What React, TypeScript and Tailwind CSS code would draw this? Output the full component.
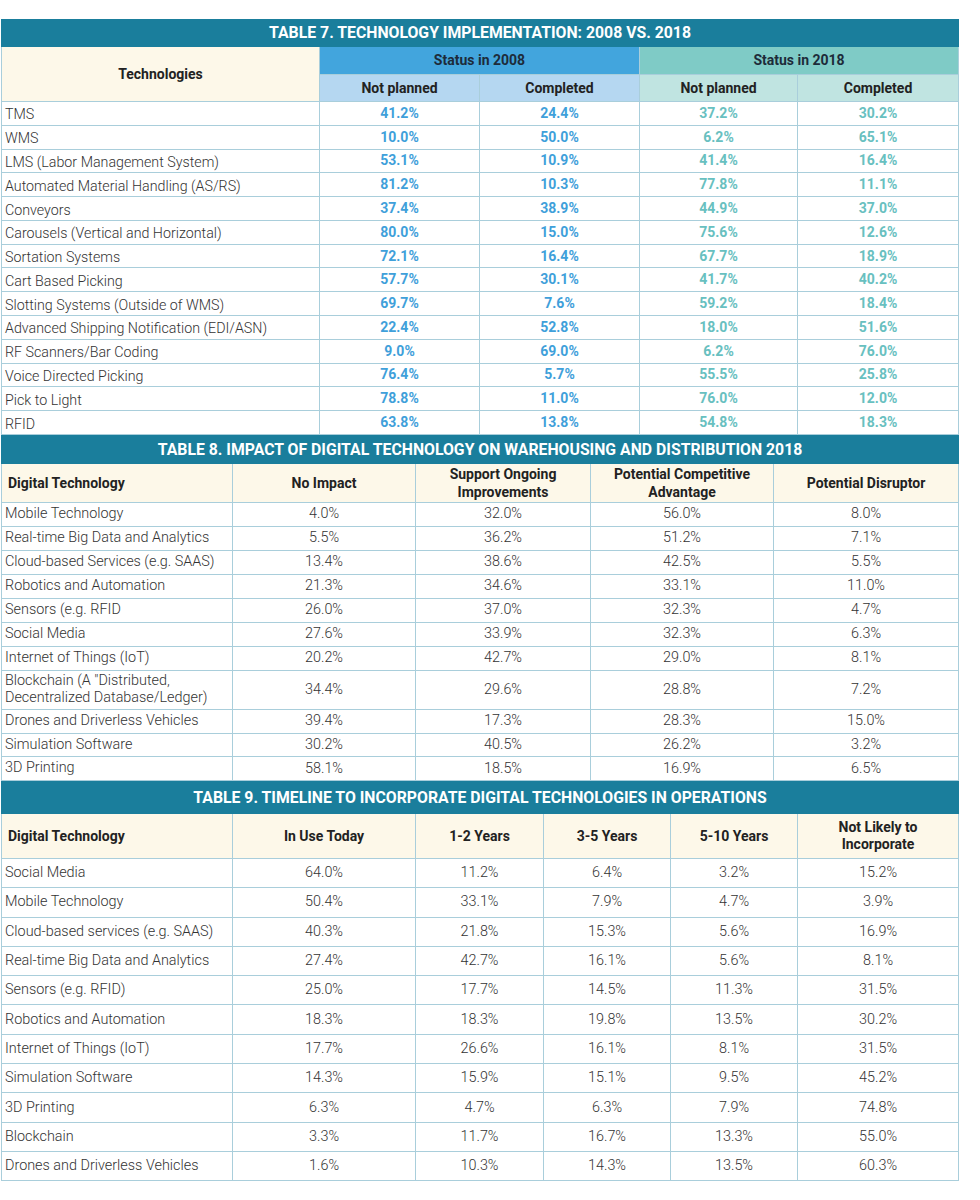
import React from "react";

const t7: [string, string, string, string, string][] = [
  ["TMS", "41.2%", "24.4%", "37.2%", "30.2%"],
  ["WMS", "10.0%", "50.0%", "6.2%", "65.1%"],
  ["LMS (Labor Management System)", "53.1%", "10.9%", "41.4%", "16.4%"],
  ["Automated Material Handling (AS/RS)", "81.2%", "10.3%", "77.8%", "11.1%"],
  ["Conveyors", "37.4%", "38.9%", "44.9%", "37.0%"],
  ["Carousels (Vertical and Horizontal)", "80.0%", "15.0%", "75.6%", "12.6%"],
  ["Sortation Systems", "72.1%", "16.4%", "67.7%", "18.9%"],
  ["Cart Based Picking", "57.7%", "30.1%", "41.7%", "40.2%"],
  ["Slotting Systems (Outside of WMS)", "69.7%", "7.6%", "59.2%", "18.4%"],
  ["Advanced Shipping Notification (EDI/ASN)", "22.4%", "52.8%", "18.0%", "51.6%"],
  ["RF Scanners/Bar Coding", "9.0%", "69.0%", "6.2%", "76.0%"],
  ["Voice Directed Picking", "76.4%", "5.7%", "55.5%", "25.8%"],
  ["Pick to Light", "78.8%", "11.0%", "76.0%", "12.0%"],
  ["RFID", "63.8%", "13.8%", "54.8%", "18.3%"],
];

const t8: { name: React.ReactNode; v: string[]; h: string }[] = [
  { name: "Mobile Technology", v: ["4.0%", "32.0%", "56.0%", "8.0%"], h: "h-[24px]" },
  { name: "Real-time Big Data and Analytics", v: ["5.5%", "36.2%", "51.2%", "7.1%"], h: "h-[24px]" },
  { name: "Cloud-based Services (e.g. SAAS)", v: ["13.4%", "38.6%", "42.5%", "5.5%"], h: "h-[24px]" },
  { name: "Robotics and Automation", v: ["21.3%", "34.6%", "33.1%", "11.0%"], h: "h-[24px]" },
  { name: "Sensors (e.g. RFID", v: ["26.0%", "37.0%", "32.3%", "4.7%"], h: "h-[24px]" },
  { name: "Social Media", v: ["27.6%", "33.9%", "32.3%", "6.3%"], h: "h-[24px]" },
  { name: "Internet of Things (IoT)", v: ["20.2%", "42.7%", "29.0%", "8.1%"], h: "h-[24px]" },
  {
    name: (
      <>
        Blockchain (A "Distributed,
        <br />
        Decentralized Database/Ledger)
      </>
    ),
    v: ["34.4%", "29.6%", "28.8%", "7.2%"],
    h: "h-[39px]",
  },
  { name: "Drones and Driverless Vehicles", v: ["39.4%", "17.3%", "28.3%", "15.0%"], h: "h-[23.7px]" },
  { name: "Simulation Software", v: ["30.2%", "40.5%", "26.2%", "3.2%"], h: "h-[23.7px]" },
  { name: "3D Printing", v: ["58.1%", "18.5%", "16.9%", "6.5%"], h: "h-[23.7px]" },
];

const t9: [string, string, string, string, string, string][] = [
  ["Social Media", "64.0%", "11.2%", "6.4%", "3.2%", "15.2%"],
  ["Mobile Technology", "50.4%", "33.1%", "7.9%", "4.7%", "3.9%"],
  ["Cloud-based services (e.g. SAAS)", "40.3%", "21.8%", "15.3%", "5.6%", "16.9%"],
  ["Real-time Big Data and Analytics", "27.4%", "42.7%", "16.1%", "5.6%", "8.1%"],
  ["Sensors (e.g. RFID)", "25.0%", "17.7%", "14.5%", "11.3%", "31.5%"],
  ["Robotics and Automation", "18.3%", "18.3%", "19.8%", "13.5%", "30.2%"],
  ["Internet of Things (IoT)", "17.7%", "26.6%", "16.1%", "8.1%", "31.5%"],
  ["Simulation Software", "14.3%", "15.9%", "15.1%", "9.5%", "45.2%"],
  ["3D Printing", "6.3%", "4.7%", "6.3%", "7.9%", "74.8%"],
  ["Blockchain", "3.3%", "11.7%", "16.7%", "13.3%", "55.0%"],
  ["Drones and Driverless Vehicles", "1.6%", "10.3%", "14.3%", "13.5%", "60.3%"],
];

const B = "border border-[#a9cedb]";

function Title({ text, h, cols }: { text: string; h: string; cols: number }) {
  return (
    <tr>
      <td
        colSpan={cols}
        className={`${h} bg-[#1a7e9c] text-white font-bold text-[15.8px] text-center p-0 leading-none border border-[#1a7e9c]`}
      >
        {text}
      </td>
    </tr>
  );
}

export default function App() {
  return (
    <div
      className="bg-white w-[980px] h-[1200px] pt-[19px] pl-[1px] text-[#333]"
      style={{ fontFamily: "Roboto, 'Liberation Sans', sans-serif" }}
    >
      {/* TABLE 7 */}
      <table className="w-[957px] table-fixed border-collapse">
        <colgroup>
          <col className="w-[318px]" />
          <col className="w-[160px]" />
          <col className="w-[160px]" />
          <col className="w-[158px]" />
          <col className="w-[161px]" />
        </colgroup>
        <tbody>
          <Title text="TABLE 7. TECHNOLOGY IMPLEMENTATION: 2008 VS. 2018" h="h-[27px]" cols={5} />
          <tr className="h-[28px]">
            <td rowSpan={2} className={`${B} bg-[#fdf8e9] text-center font-bold text-[14px] text-[#222]`}>
              Technologies
            </td>
            <td colSpan={2} className={`${B} bg-[#42a5dd] text-center font-bold text-[14px] text-[#1d2b3a]`}>
              Status in 2008
            </td>
            <td colSpan={2} className={`${B} bg-[#7fcbc6] text-center font-bold text-[14px] text-[#1d2b3a]`}>
              Status in 2018
            </td>
          </tr>
          <tr className="h-[27px]">
            <td className={`${B} bg-[#b5d7f1] text-center font-bold text-[14px] text-[#222]`}>Not planned</td>
            <td className={`${B} bg-[#b5d7f1] text-center font-bold text-[14px] text-[#222]`}>Completed</td>
            <td className={`${B} bg-[#c0e4e1] text-center font-bold text-[14px] text-[#222]`}>Not planned</td>
            <td className={`${B} bg-[#c0e4e1] text-center font-bold text-[14px] text-[#222]`}>Completed</td>
          </tr>
          {t7.map((r) => (
            <tr key={r[0]} className="h-[23.79px]">
              <td className={`${B} px-[3px] pt-[3px] pb-0 text-[14.25px] font-light leading-[19px] whitespace-nowrap`}>{r[0]}</td>
              <td className={`${B} text-center font-bold text-[14px] leading-[19px] text-[#3fa0da]`}>{r[1]}</td>
              <td className={`${B} text-center font-bold text-[14px] leading-[19px] text-[#3fa0da]`}>{r[2]}</td>
              <td className={`${B} text-center font-bold text-[14px] leading-[19px] text-[#68c0c0]`}>{r[3]}</td>
              <td className={`${B} text-center font-bold text-[14px] leading-[19px] text-[#68c0c0]`}>{r[4]}</td>
            </tr>
          ))}
        </tbody>
      </table>

      {/* TABLE 8 */}
      <table className="w-[957px] table-fixed border-collapse">
        <colgroup>
          <col className="w-[231px]" />
          <col className="w-[183px]" />
          <col className="w-[175px]" />
          <col className="w-[183px]" />
          <col className="w-[185px]" />
        </colgroup>
        <tbody>
          <Title
            text="TABLE 8. IMPACT OF DIGITAL TECHNOLOGY ON WAREHOUSING AND DISTRIBUTION 2018"
            h="h-[28px]"
            cols={5}
          />
          <tr className="h-[39px] bg-[#fdf8e9] text-[14px] font-bold text-[#222] leading-[18px]">
            <td className={`${B} pl-[6px] py-0`}>Digital Technology</td>
            <td className={`${B} text-center py-0`}>No Impact</td>
            <td className={`${B} text-center py-0`}>
              Support Ongoing
              <br />
              Improvements
            </td>
            <td className={`${B} text-center py-0`}>
              Potential Competitive
              <br />
              Advantage
            </td>
            <td className={`${B} text-center py-0`}>Potential Disruptor</td>
          </tr>
          {t8.map((r, i) => (
            <tr key={i} className={r.h}>
              <td className={`${B} px-[3px] py-0 text-[14.4px] font-light leading-[16.5px] whitespace-nowrap`}>{r.name}</td>
              {r.v.map((v, j) => (
                <td key={j} className={`${B} py-0 text-center text-[14.4px] font-light leading-[16px]`}>
                  {v}
                </td>
              ))}
            </tr>
          ))}
        </tbody>
      </table>

      {/* TABLE 9 */}
      <table className="w-[957px] table-fixed border-collapse">
        <colgroup>
          <col className="w-[231px]" />
          <col className="w-[183px]" />
          <col className="w-[128px]" />
          <col className="w-[127px]" />
          <col className="w-[127px]" />
          <col className="w-[161px]" />
        </colgroup>
        <tbody>
          <Title text="TABLE 9. TIMELINE TO INCORPORATE DIGITAL TECHNOLOGIES IN OPERATIONS" h="h-[32px]" cols={6} />
          <tr className="h-[45px] bg-[#fdf8e9] text-[14px] font-bold text-[#222] leading-[17px]">
            <td className={`${B} pl-[6px] py-0`}>Digital Technology</td>
            <td className={`${B} text-center py-0`}>In Use Today</td>
            <td className={`${B} text-center py-0`}>1-2 Years</td>
            <td className={`${B} text-center py-0`}>3-5 Years</td>
            <td className={`${B} text-center py-0`}>5-10 Years</td>
            <td className={`${B} text-center py-0`}>
              Not Likely to
              <br />
              Incorporate
            </td>
          </tr>
          {t9.map((r) => (
            <tr key={r[0]} className="h-[29.3px]">
              <td className={`${B} px-[3px] py-0 text-[14.4px] font-light leading-[16px] whitespace-nowrap`}>{r[0]}</td>
              {r.slice(1).map((v, j) => (
                <td key={j} className={`${B} py-0 text-center text-[14.4px] font-light leading-[16px]`}>
                  {v}
                </td>
              ))}
            </tr>
          ))}
        </tbody>
      </table>
    </div>
  );
}
